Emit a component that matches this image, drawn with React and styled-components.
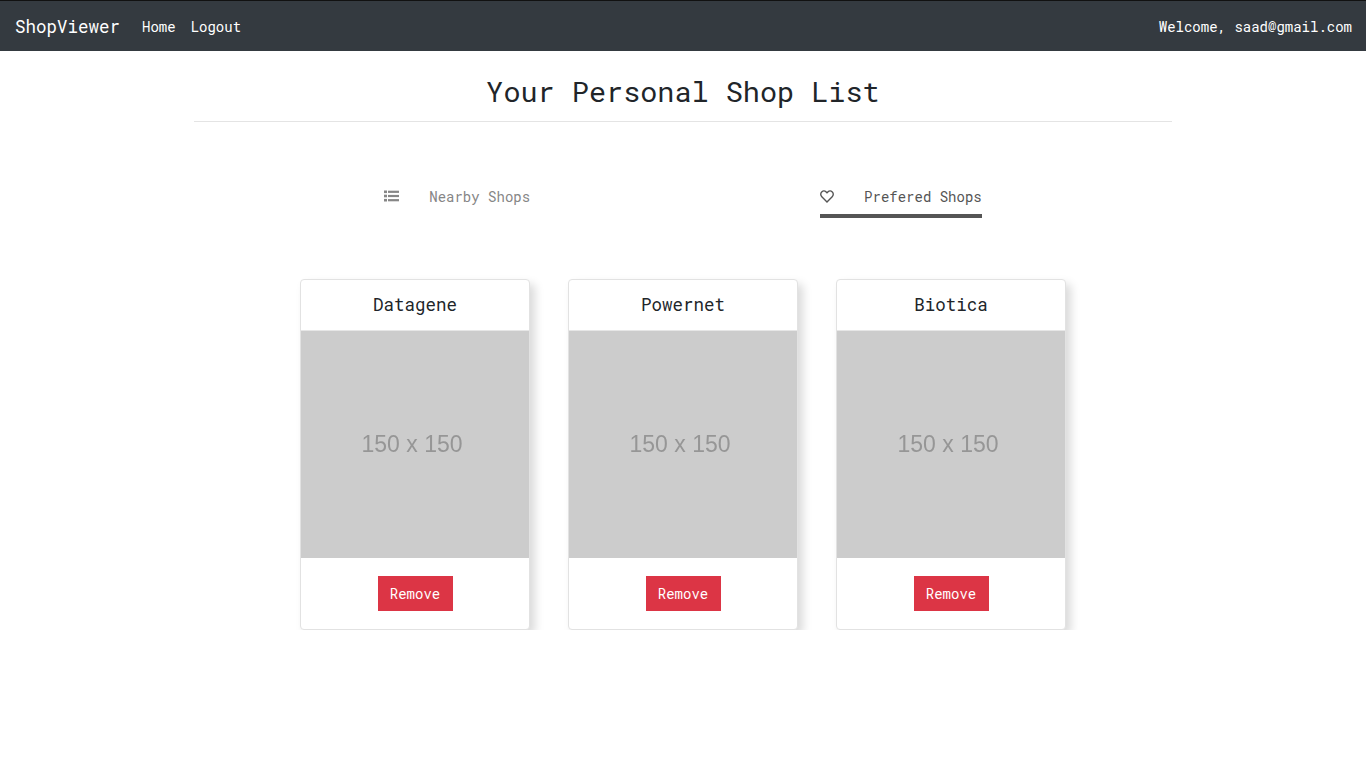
import React from 'react';
import styled, { createGlobalStyle } from 'styled-components';

const shops = ['Datagene', 'Powernet', 'Biotica'];

const GlobalStyle = createGlobalStyle`
  html, body {
    margin: 0;
    padding: 0;
    background: #fff;
  }
  body {
    font-family: "Roboto Mono", "DejaVu Sans Mono", "Liberation Mono", monospace;
    font-size: 14px;
    color: #212529;
  }
`;

const Navbar = styled.nav`
  height: 50px;
  border-top: 1px solid #111;
  background: #343a40;
  display: flex;
  align-items: center;
  padding: 0 14px 0 15px;
  color: #fff;
`;

const Brand = styled.a`
  font-size: 17.5px;
  margin-right: 22px;
  color: #fff;
`;

const NavLink = styled.a`
  font-size: 14px;
  margin-right: 15px;
  color: #fff;
`;

const Welcome = styled.span`
  margin-left: auto;
  font-size: 14px;
`;

const Container = styled.main`
  width: 978px;
  margin: 0 auto;
  transform: translateX(0);
`;

const Title = styled.h1`
  margin: 0;
  height: 70px;
  line-height: 80px;
  border-bottom: 1px solid #e4e4e4;
  text-align: center;
  font-size: 28.5px;
  font-weight: 400;
  color: #212529;
`;

const Tabs = styled.div`
  display: flex;
  justify-content: center;
  gap: 290px;
  margin-top: 60px;
`;

const Tab = styled.div`
  display: flex;
  align-items: center;
  height: 36px;
  padding-bottom: 4px;
  box-sizing: border-box;
  gap: 30px;
  font-size: 14px;
  color: ${p => (p.$active ? '#555' : '#868686')};
  border-bottom: 4px solid ${p => (p.$active ? '#555' : 'transparent')};
`;

const Cards = styled.div`
  display: flex;
  justify-content: center;
  gap: 38px;
  margin-top: 61px;
`;

const Card = styled.article`
  width: 230px;
  height: 351px;
  box-sizing: border-box;
  border: 1px solid #e2e2e2;
  border-radius: 4px;
  background: #fff;
  box-shadow: 5px 5px 10px rgba(0, 0, 0, 0.15);
  display: flex;
  flex-direction: column;
`;

const CardTitle = styled.h3`
  margin: 0;
  height: 50px;
  line-height: 50px;
  border-bottom: 1px solid #e6e6e6;
  text-align: center;
  font-size: 17.5px;
  font-weight: 400;
  color: #212529;
`;

const Placeholder = styled.div`
  height: 227px;
  background: #cccccc;
  display: flex;
  align-items: center;
  justify-content: center;
  padding-right: 6px;
  font-family: "Liberation Sans", Arial, sans-serif;
  font-size: 23px;
  color: #969696;
  filter: blur(0.6px);
`;

const CardFooter = styled.div`
  flex: 1;
  display: flex;
  align-items: center;
  justify-content: center;
`;

const RemoveButton = styled.button`
  width: 75px;
  height: 35px;
  padding: 0;
  border: none;
  background: #dc3545;
  color: #fff;
  font: inherit;
  font-size: 14px;
`;

const ListIcon = () => (
  <svg width="15" height="12" viewBox="0 0 15 12" fill="#868686">
    <rect x="0" y="0.5" width="3" height="2.6" />
    <rect x="0" y="4.7" width="3" height="2.6" />
    <rect x="0" y="8.9" width="3" height="2.6" />
    <rect x="4" y="0.7" width="11" height="2.2" />
    <rect x="4" y="4.9" width="11" height="2.2" />
    <rect x="4" y="9.1" width="11" height="2.2" />
  </svg>
);

const HeartIcon = () => (
  <svg width="14" height="13" viewBox="0 0 14 13" fill="none" stroke="#555" strokeWidth="1.4">
    <path d="M7 11.9 1.8 6.7C.4 5.3.4 3.1 1.7 1.9 3 .7 5 .8 6.2 2L7 2.8 7.8 2C9 .8 11 .7 12.3 1.9c1.3 1.2 1.3 3.4-.1 4.8L7 11.9Z" />
  </svg>
);

export default function App() {
  return (
    <>
      <GlobalStyle />
      <Navbar>
        <Brand>ShopViewer</Brand>
        <NavLink>Home</NavLink>
        <NavLink>Logout</NavLink>
        <Welcome>Welcome, saad@gmail.com</Welcome>
      </Navbar>
      <Container>
        <Title>Your Personal Shop List</Title>
        <Tabs>
          <Tab>
            <ListIcon />
            Nearby Shops
          </Tab>
          <Tab $active>
            <HeartIcon />
            Prefered Shops
          </Tab>
        </Tabs>
        <Cards>
          {shops.map(name => (
            <Card key={name}>
              <CardTitle>{name}</CardTitle>
              <Placeholder>150 x 150</Placeholder>
              <CardFooter>
                <RemoveButton>Remove</RemoveButton>
              </CardFooter>
            </Card>
          ))}
        </Cards>
      </Container>
    </>
  );
}
